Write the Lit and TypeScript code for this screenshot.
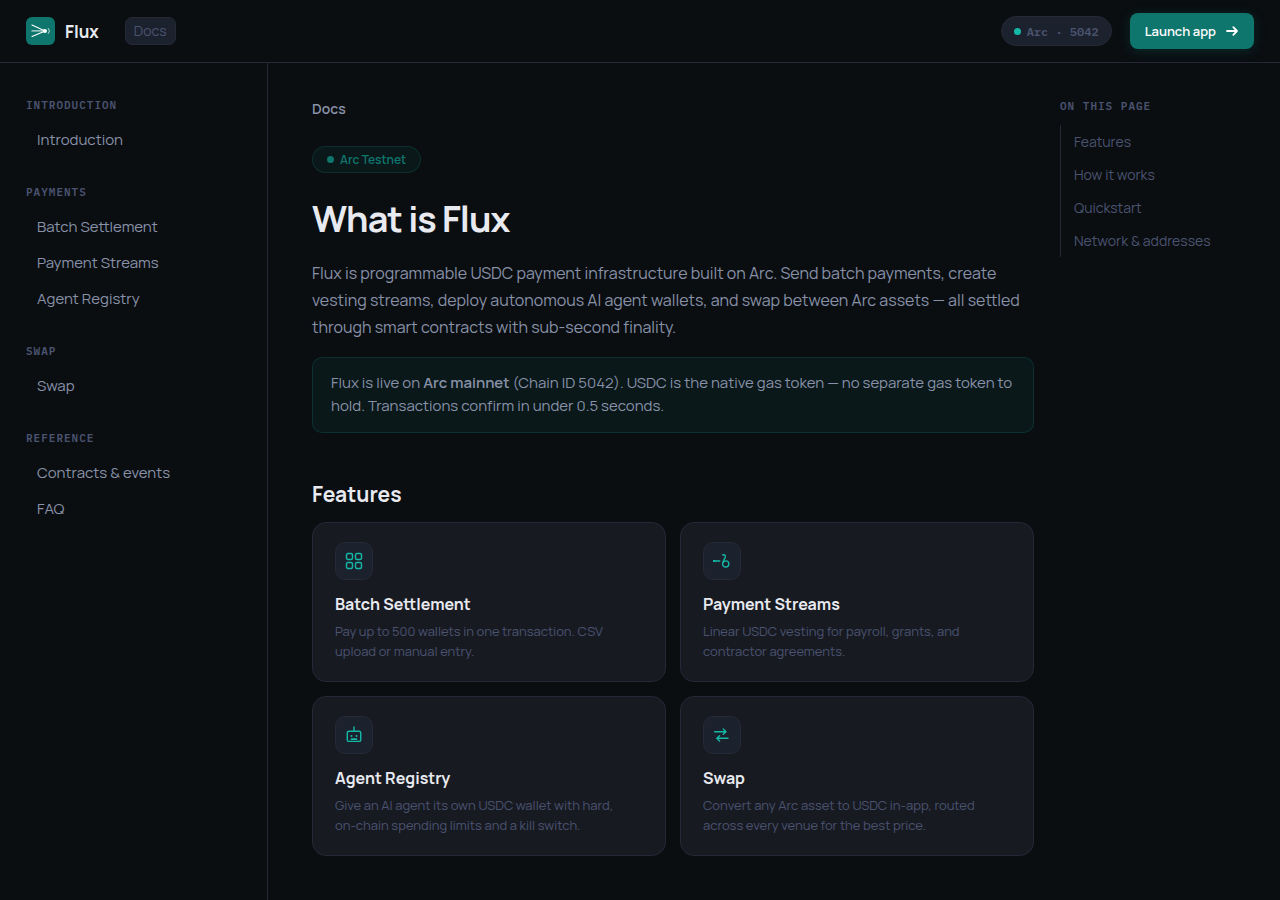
import { LitElement, html, css, svg } from "lit";
import { customElement } from "lit/decorators.js";

const NAV = [
  { title: "Introduction", links: ["Introduction"] },
  { title: "Payments", links: ["Batch Settlement", "Payment Streams", "Agent Registry"] },
  { title: "Swap", links: ["Swap"] },
  { title: "Reference", links: ["Contracts & events", "FAQ"] },
];

const TOC = ["Features", "How it works", "Quickstart", "Network & addresses"];

const gridIcon = svg`
  <rect x="1.5" y="1.5" width="6" height="6" rx="1.5"/>
  <rect x="10.5" y="1.5" width="6" height="6" rx="1.5"/>
  <rect x="1.5" y="10.5" width="6" height="6" rx="1.5"/>
  <rect x="10.5" y="10.5" width="6" height="6" rx="1.5"/>`;

const streamIcon = svg`
  <path d="M0.4 9H6.8"/>
  <path d="M0.6 9H1.6" stroke-width="2"/>
  <path d="M9.6 2.9C11.8 2.2 13 3.6 12 5.8C10.6 8.4 9.4 10.2 9.6 12.2C9.8 14 11 15 12.6 15C14.6 15 15.8 13.6 15.8 11.8C15.8 10 14.6 8.9 12.9 8.9C11.6 8.9 10.4 9.7 9.8 11"/>`;

const agentIcon = svg`
  <path d="M9 1V5"/>
  <rect x="2.3" y="5.2" width="13.4" height="10.2" rx="1.5"/>
  <circle cx="6.5" cy="10" r="1" fill="currentColor" stroke="none"/>
  <circle cx="11.5" cy="10" r="1" fill="currentColor" stroke="none"/>
  <path d="M6.5 13.2H11.5" stroke-width="1.8"/>`;

const swapIcon = svg`
  <path d="M1.6 5.7H12.8M10.2 3.1L13 5.7L10.2 8.3"/>
  <path d="M15 12.3H4M6.6 9.7L3.8 12.3L6.6 14.9"/>`;

const CARDS = [
  { title: "Batch Settlement", icon: gridIcon, text: "Pay up to 500 wallets in one transaction. CSV upload or manual entry." },
  { title: "Payment Streams", icon: streamIcon, text: "Linear USDC vesting for payroll, grants, and contractor agreements." },
  { title: "Agent Registry", icon: agentIcon, text: "Give an AI agent its own USDC wallet with hard, on-chain spending limits and a kill switch." },
  { title: "Swap", icon: swapIcon, text: "Convert any Arc asset to USDC in-app, routed across every venue for the best price." },
];

@customElement("app-root")
export class AppRoot extends LitElement {
  static styles = css`
    :host {
      display: flex;
      flex-direction: column;
      min-height: 100vh;
      background: #0a0e11;
      color: #e8eaf0;
      font-family: Manrope, Inter, sans-serif;
      font-size: 15px;
    }
    * { box-sizing: border-box; }
    a { color: inherit; text-decoration: none; }
    h1, h2, h3, p, ul { margin: 0; padding: 0; }
    ul { list-style: none; }

    .topbar {
      display: flex;
      align-items: center;
      justify-content: space-between;
      height: 63px;
      padding: 0 26px;
      border-bottom: 1px solid #252836;
    }
    .side { display: flex; align-items: center; }
    .left { gap: 26px; }
    .right { gap: 18px; }
    .brand {
      display: flex;
      align-items: center;
      gap: 10px;
      font-size: 17px;
      font-weight: 700;
    }
    .logo { display: block; width: 29px; height: 28px; }
    .tag {
      height: 28px;
      padding: 0 8px;
      border: 1px solid #252836;
      border-radius: 7px;
      background: #1c222d;
      color: #4a5370;
      font-size: 14px;
      line-height: 26px;
    }
    .network {
      display: flex;
      align-items: center;
      gap: 6px;
      height: 30px;
      padding: 0 12px;
      border: 1px solid #252836;
      border-radius: 15px;
      background: #1c222d;
      color: #4a5370;
      font: 600 12px "IBM Plex Mono", "Liberation Mono", monospace;
    }
    .dot { width: 7px; height: 7px; border-radius: 50%; background: #14b8a6; }
    .launch {
      display: flex;
      align-items: center;
      gap: 9px;
      height: 36px;
      padding: 0 15px;
      border: 0;
      border-radius: 8px;
      background: #0f766e;
      box-shadow: 0 2px 12px #0f766e40;
      color: #fff;
      font: 600 13px Manrope, Inter, sans-serif;
      cursor: pointer;
    }
    .arrow { width: 14px; height: 14px; }

    .body {
      flex: 1;
      display: grid;
      grid-template-columns: 268px minmax(0, 1fr) 220px;
    }
    .nav {
      display: flex;
      flex-direction: column;
      gap: 25px;
      padding: 33px 26px;
      border-right: 1px solid #252836;
    }
    .label {
      color: #4a5370;
      font: 600 11px/18px "IBM Plex Mono", "Liberation Mono", monospace;
      letter-spacing: 1px;
      text-transform: uppercase;
    }
    .group { margin-top: 8px; }
    .link {
      display: block;
      padding: 0 11px;
      color: #8891a8;
      font-size: 15px;
      line-height: 36px;
    }

    .main { padding: 34px 26px 40px 44px; }
    .crumb {
      display: block;
      color: #8891a8;
      font-size: 14px;
      font-weight: 600;
      line-height: 24px;
    }
    .pill {
      display: inline-flex;
      align-items: center;
      gap: 6px;
      height: 27px;
      margin-top: 25px;
      padding: 0 14px;
      border: 1px solid #0f766e40;
      border-radius: 14px;
      background: #0f766e1a;
      color: #0f766e;
      font-size: 12px;
      font-weight: 600;
    }
    .pill .dot { background: #0f766e; }
    .title {
      margin-top: 24px;
      font-size: 36px;
      font-weight: 700;
      line-height: 44px;
      letter-spacing: -1px;
    }
    .lead {
      margin-top: 19px;
      color: #8891a8;
      font-size: 16px;
      line-height: 27px;
    }
    .callout {
      margin-top: 16px;
      padding: 13px 18px 15px;
      border: 1px solid #0f766e40;
      border-radius: 10px;
      background: #0f766e1a;
      color: #8891a8;
      font-size: 15px;
      line-height: 23px;
    }
    .callout b { font-weight: 600; }
    .heading {
      margin-top: 46px;
      font-size: 21px;
      font-weight: 700;
      line-height: 30px;
    }
    .cards {
      display: grid;
      grid-template-columns: repeat(2, minmax(0, 1fr));
      gap: 14px;
      margin-top: 13px;
    }
    .card {
      display: block;
      padding: 19px 22px 20px;
      border: 1px solid #252836;
      border-radius: 14px;
      background: #181a22;
    }
    .tile {
      display: flex;
      align-items: center;
      justify-content: center;
      width: 38px;
      height: 38px;
      border: 1px solid #252836;
      border-radius: 10px;
      background: #1c222d;
      color: #14b8a6;
    }
    .icon {
      width: 18px;
      height: 18px;
      fill: none;
      stroke: currentColor;
      stroke-width: 1.4;
      stroke-linecap: round;
      stroke-linejoin: round;
    }
    .name {
      margin-top: 13px;
      font-size: 16px;
      font-weight: 700;
      line-height: 22px;
    }
    .text {
      margin-top: 6px;
      padding-right: 10px;
      color: #4a5370;
      font-size: 13px;
      line-height: 20px;
    }

    .toc { padding: 34px 26px 34px 0; }
    .list {
      margin-top: 10px;
      padding-left: 13px;
      border-left: 1px solid #252836;
    }
    .jump {
      display: block;
      color: #4a5370;
      font-size: 14px;
      line-height: 33px;
      white-space: nowrap;
    }
  `;

  render() {
    return html`
      <header class="topbar">
        <div class="side left">
          <a class="brand" href="#">
            <svg class="logo" viewBox="0 0 29 28" aria-hidden="true">
              <rect width="29" height="28" rx="6" fill="#0f766e"/>
              <g fill="none" stroke="#fff" stroke-linecap="round">
                <path d="M6 8L18 13.4M6 19.5L18 14.6" stroke-width="1.1"/>
                <path d="M6 13.9H18" stroke-width="1.3" opacity=".75"/>
                <path d="M22.4 11.5Q24.8 14 22.4 16.5" stroke-width=".9" opacity=".8"/>
              </g>
              <circle cx="18.9" cy="14" r="2.1" fill="#fff"/>
            </svg>
            <span>Flux</span>
          </a>
          <a class="tag" href="#">Docs</a>
        </div>
        <div class="side right">
          <div class="network"><span class="dot"></span>Arc · 5042</div>
          <button class="launch" type="button">
            Launch app
            <svg class="arrow" viewBox="0 0 14 14" fill="none" stroke="#fff" stroke-width="1.8" stroke-linecap="round" stroke-linejoin="round" aria-hidden="true">
              <path d="M2 7H12M8.3 3.2L12 7L8.3 10.8"/>
            </svg>
          </button>
        </div>
      </header>
      <div class="body">
        <nav class="nav">
          ${NAV.map((g) => html`
            <section>
              <div class="label">${g.title}</div>
              <ul class="group">
                ${g.links.map((l) => html`<li><a class="link" href="#">${l}</a></li>`)}
              </ul>
            </section>`)}
        </nav>
        <main class="main">
          <a class="crumb" href="#">Docs</a>
          <div class="pill"><span class="dot"></span>Arc Testnet</div>
          <h1 class="title">What is Flux</h1>
          <p class="lead">Flux is programmable USDC payment infrastructure built on Arc. Send batch payments, create vesting streams, deploy autonomous AI agent wallets, and swap between Arc assets — all settled through smart contracts with sub-second finality.</p>
          <p class="callout">Flux is live on <b>Arc mainnet</b> (Chain ID 5042). USDC is the native gas token — no separate gas token to hold. Transactions confirm in under 0.5 seconds.</p>
          <h2 class="heading">Features</h2>
          <div class="cards">
            ${CARDS.map((c) => html`
              <a class="card" href="#">
                <div class="tile"><svg class="icon" viewBox="0 0 18 18" aria-hidden="true">${c.icon}</svg></div>
                <h3 class="name">${c.title}</h3>
                <p class="text">${c.text}</p>
              </a>`)}
          </div>
        </main>
        <aside class="toc">
          <div class="label">On this page</div>
          <ul class="list">
            ${TOC.map((t) => html`<li><a class="jump" href="#">${t}</a></li>`)}
          </ul>
        </aside>
      </div>
    `;
  }
}
